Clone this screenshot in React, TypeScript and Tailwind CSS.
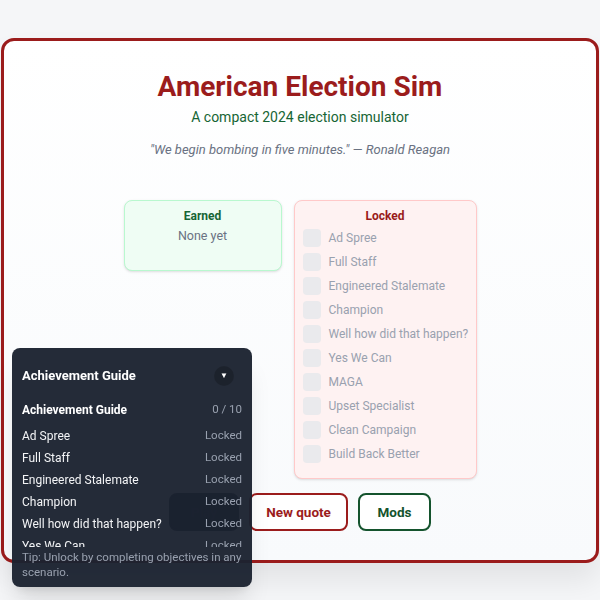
import React from 'react';

const ACHIEVEMENTS = [
  'Ad Spree',
  'Full Staff',
  'Engineered Stalemate',
  'Champion',
  'Well how did that happen?',
  'Yes We Can',
  'MAGA',
  'Upset Specialist',
  'Clean Campaign',
  'Build Back Better',
];

const AchievementGuide: React.FC = () => {
  return (
    <aside className="fixed left-3 bottom-[13px] z-50 flex h-[239px] w-[240px] flex-col rounded-lg bg-[#1b2230]/[0.96] text-white shadow-xl">
      {/* Panel header */}
      <div className="flex shrink-0 items-center justify-between pl-[10px] pr-[18px] pt-[18px] pb-[14px]">
        <h2 className="text-[13px] font-bold leading-5">Achievement Guide</h2>
        <button className="flex h-5 w-5 items-center justify-center rounded-full bg-black/20 text-[8px] text-white">
          ▼
        </button>
      </div>

      <div className="flex shrink-0 items-center justify-between px-[10px] pb-[5px]">
        <span className="text-[12px] font-bold leading-5">Achievement Guide</span>
        <span className="text-[11.5px] text-gray-400">0 / 10</span>
      </div>

      {/* Scrollable list */}
      <ul className="min-h-0 flex-1 overflow-hidden px-[10px]">
        {ACHIEVEMENTS.map((name) => (
          <li key={name} className="flex h-[22px] shrink-0 items-center justify-between text-[12px]">
            <span className="text-gray-100">{name}</span>
            <span className="text-[11.5px] text-gray-400">Locked</span>
          </li>
        ))}
      </ul>

      <p className="shrink-0 px-[10px] pt-[3px] pb-[7px] text-[11.5px] leading-[15px] text-gray-400">
        Tip: Unlock by completing objectives in any scenario.
      </p>
    </aside>
  );
};

export default function App() {
  return (
    <div
      className="min-h-[600px] bg-[#f5f6f8] px-px pt-[38px]"
      style={{ fontFamily: 'Roboto, "Noto Sans", sans-serif' }}
    >
      <main className="rounded-[13px] border-[3px] border-[#9b1c1c] bg-gradient-to-b from-white to-[#f8fafc] pt-[29px] pb-[29px] shadow-[0_18px_30px_rgba(0,0,0,0.08)]">
        <header className="flex flex-col items-center">
          <h1 className="text-[28px] font-bold leading-[34px] text-[#9b1c1c]">American Election Sim</h1>
          <p className="mt-[3px] text-[14px] leading-5 text-[#166534]">A compact 2024 election simulator</p>
          <p className="mt-[13px] text-[13px] italic leading-5 text-gray-500">
            "We begin bombing in five minutes." — Ronald Reagan
          </p>
        </header>

        <section className="mt-[40px] flex items-start justify-center gap-3">
          <div className="flex h-[71px] w-[158px] flex-col items-center rounded-lg border border-green-200 bg-[#effdf4] pt-[7px] shadow-sm">
            <h3 className="text-[12px] font-bold leading-4 text-[#166534]">Earned</h3>
            <p className="mt-[2px] text-[12.5px] leading-5 text-gray-500">None yet</p>
          </div>

          <div className="flex w-[183px] flex-col rounded-lg border border-red-200 bg-[#fef2f2] px-[8px] pt-[7px] pb-[15px] shadow-sm">
            <h3 className="text-center text-[12px] font-bold leading-4 text-[#991b1b]">Locked</h3>
            <ul className="mt-[5px] flex flex-col gap-[6px]">
              {ACHIEVEMENTS.map((name) => (
                <li key={name} className="flex h-[18px] items-center gap-2">
                  <span className="h-[18px] w-[18px] shrink-0 rounded bg-gray-200/80" />
                  <span className="whitespace-nowrap text-[12px] text-gray-400">{name}</span>
                </li>
              ))}
            </ul>
          </div>
        </section>

        <div className="mt-[14px] flex justify-center gap-[10px]">
          <button className="h-[38px] w-[70px] rounded-lg border-2 border-[#111827] bg-[#111827] text-[13.5px] font-bold text-[#1f2937]">
            Play
          </button>
          <button className="h-[38px] w-[99px] rounded-lg border-2 border-[#9b1c1c] bg-white text-[13.5px] font-bold text-[#9b1c1c]">
            New quote
          </button>
          <button className="h-[38px] w-[73px] rounded-lg border-2 border-[#14532d] bg-white text-[13.5px] font-bold text-[#14532d]">
            Mods
          </button>
        </div>
      </main>

      <AchievementGuide />
    </div>
  );
}
